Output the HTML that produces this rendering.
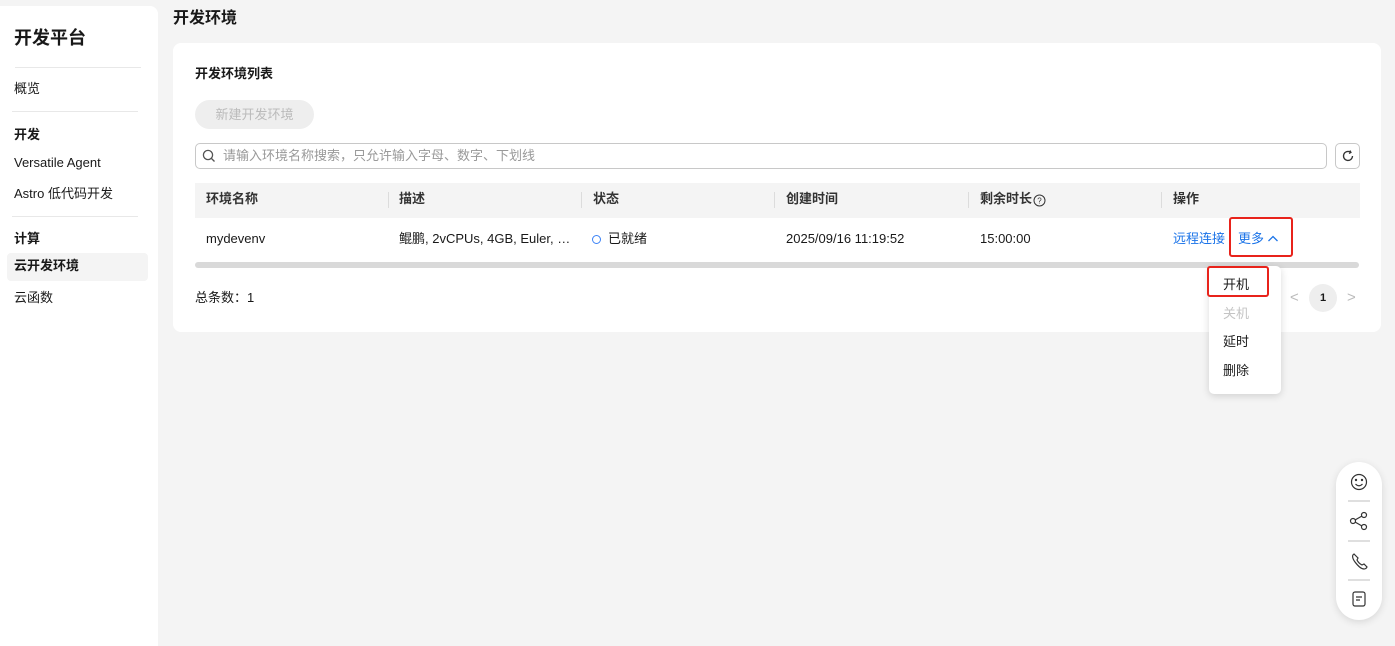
<!DOCTYPE html>
<html><head><meta charset="utf-8"><style>
*{margin:0;padding:0;box-sizing:border-box}
body{width:1395px;height:630px;background:#f4f4f4;font-family:"Liberation Sans","Noto Sans CJK SC",sans-serif;font-size:13px;line-height:16px;color:#191919;position:relative;overflow:hidden}
.abs{position:absolute}
.side{left:0;top:6px;width:158px;height:640px;background:#fff;border-radius:0 8px 0 0}
.hr{height:1px;background:#e8e8e8}
.card{left:173px;top:43px;width:1208px;height:289px;background:#fff;border-radius:8px}
.th{color:#333;font-weight:bold}
.sep{width:1px;height:16px;background:#dcdcdc;top:192px}
</style></head><body>
<div class="abs side"></div>
<div class="abs" style="left:14px;top:27px;font-size:18px;line-height:22px;font-weight:bold">开发平台</div>
<div class="abs hr" style="left:15px;top:67px;width:126px"></div>
<div class="abs" style="left:14px;top:81px">概览</div>
<div class="abs hr" style="left:12px;top:111px;width:126px"></div>
<div class="abs" style="left:14px;top:127px;font-weight:bold">开发</div>
<div class="abs" style="left:14px;top:155px">Versatile Agent</div>
<div class="abs" style="left:14px;top:186px">Astro 低代码开发</div>
<div class="abs hr" style="left:12px;top:216px;width:126px"></div>
<div class="abs" style="left:14px;top:231px;font-weight:bold">计算</div>
<div class="abs" style="left:7px;top:253px;width:141px;height:28px;background:#f4f4f4;border-radius:4px"></div>
<div class="abs" style="left:14px;top:258px;font-weight:bold">云开发环境</div>
<div class="abs" style="left:14px;top:290px">云函数</div>

<div class="abs" style="left:173px;top:9px;font-size:16px;line-height:20px;font-weight:bold">开发环境</div>
<div class="abs card"></div>
<div class="abs" style="left:195px;top:66px;font-weight:bold">开发环境列表</div>
<div class="abs" style="left:195px;top:100px;width:119px;height:29px;background:#eee;border-radius:15px;color:#bbb;text-align:center;line-height:29px">新建开发环境</div>
<div class="abs" style="left:195px;top:143px;width:1132px;height:26px;border:1px solid #c8c8c8;border-radius:5px"></div>
<svg class="abs" style="left:202px;top:149px" width="14" height="14" viewBox="0 0 14 14"><circle cx="6" cy="6" r="4.6" fill="none" stroke="#555" stroke-width="1.3"/><path d="M9.5 9.5L12.5 12.5" stroke="#555" stroke-width="1.3"/></svg>
<div class="abs" style="left:223px;top:148px;color:#999">请输入环境名称搜索，只允许输入字母、数字、下划线</div>
<div class="abs" style="left:1335px;top:143px;width:25px;height:26px;border:1px solid #c8c8c8;border-radius:5px"></div>
<svg class="abs" style="left:1341px;top:149px" width="14" height="14" viewBox="0 0 14 14"><path d="M11.5 7A4.5 4.5 0 1 1 9.5 3.2" fill="none" stroke="#333" stroke-width="1.3"/><path d="M9 1.5L10 3.5 8 4.5" fill="none" stroke="#333" stroke-width="1.2"/></svg>

<div class="abs" style="left:195px;top:183px;width:1165px;height:35px;background:#f4f4f4"></div>
<div class="abs th" style="left:206px;top:191px">环境名称</div>
<div class="abs sep" style="left:388px"></div><div class="abs th" style="left:399px;top:191px">描述</div>
<div class="abs sep" style="left:581px"></div><div class="abs th" style="left:593px;top:191px">状态</div>
<div class="abs sep" style="left:774px"></div><div class="abs th" style="left:786px;top:191px">创建时间</div>
<div class="abs sep" style="left:968px"></div><div class="abs th" style="left:980px;top:191px">剩余时长</div>
<svg class="abs" style="left:1033px;top:194px" width="13" height="13" viewBox="0 0 13 13"><circle cx="6.5" cy="6.5" r="5.5" fill="none" stroke="#333"/><text x="6.5" y="9.5" font-size="8" text-anchor="middle" fill="#333" font-family="Liberation Sans">?</text></svg>
<div class="abs sep" style="left:1161px"></div><div class="abs th" style="left:1173px;top:191px">操作</div>
<div class="abs" style="left:206px;top:231px">mydevenv</div>
<div class="abs" style="left:399px;top:231px">鲲鹏, 2vCPUs, 4GB, Euler, …</div>
<div class="abs" style="left:592px;top:235px;width:9px;height:9px;border:1.5px solid #3b82f6;border-radius:50%"></div>
<div class="abs" style="left:608px;top:231px">已就绪</div>
<div class="abs" style="left:786px;top:231px">2025/09/16 11:19:52</div>
<div class="abs" style="left:980px;top:231px">15:00:00</div>
<div class="abs" style="left:1173px;top:231px;color:#1a73e8">远程连接</div>
<div class="abs" style="left:1238px;top:231px;color:#1a73e8">更多</div>
<svg class="abs" style="left:1267px;top:234px" width="12" height="10" viewBox="0 0 12 10"><path d="M1.5 7L6 2.5 10.5 7" fill="none" stroke="#1a73e8" stroke-width="1.3"/></svg>
<div class="abs" style="left:1229px;top:217px;width:64px;height:40px;border:2px solid #e8231b;border-radius:3px"></div>
<div class="abs" style="left:195px;top:262px;width:1164px;height:6px;background:#d9d9d9;border-radius:3px"></div>
<div class="abs" style="left:195px;top:290px">总条数：1</div>
<div class="abs" style="left:1290px;top:290px;color:#bbb;font-size:15px">&lt;</div>
<div class="abs" style="left:1309px;top:284px;width:28px;height:28px;background:#eee;border-radius:50%;text-align:center;line-height:28px;font-size:11px;font-weight:bold">1</div>
<div class="abs" style="left:1347px;top:290px;color:#bbb;font-size:15px">&gt;</div>

<div class="abs" style="left:1209px;top:266px;width:72px;height:128px;background:#fff;border-radius:5px;box-shadow:0 2px 8px rgba(0,0,0,.15)"></div>
<div class="abs" style="left:1223px;top:277px">开机</div>
<div class="abs" style="left:1207px;top:266px;width:62px;height:31px;border:2px solid #e8231b;border-radius:3px"></div>
<div class="abs" style="left:1223px;top:306px;color:#c4c4c4">关机</div>
<div class="abs" style="left:1223px;top:334px">延时</div>
<div class="abs" style="left:1223px;top:363px">删除</div>

<div class="abs" style="left:1336px;top:462px;width:46px;height:158px;background:#fff;border-radius:23px;box-shadow:0 2px 8px rgba(0,0,0,.12)"></div>
<svg class="abs" style="left:1336px;top:462px" width="46" height="158" viewBox="0 0 46 158" fill="none" stroke="#333" stroke-width="1.2">
<circle cx="23" cy="20" r="7.5"/><circle cx="20" cy="18" r=".6" fill="#333"/><circle cx="26" cy="18" r=".6" fill="#333"/><path d="M19.5 22Q23 25.5 26.5 22"/>
<path d="M12 39H34M12 79H34M12 118H34" stroke="#ccc"/>
<circle cx="17" cy="59" r="2.5"/><circle cx="28" cy="53" r="2.5"/><circle cx="28" cy="65" r="2.5"/><path d="M19 58L26 54M19 60L26 64"/>
<path d="M18 92c-2 1-2 4 1 8s6 7 9 7c2 0 3-2 3-2l-3-3-2 1c-2-1-4-3-5-5l1-2-3-3z"/>
<rect x="17" y="130" width="12" height="14" rx="2"/><path d="M20 135H26M20 138H24"/>
</svg>
</body></html>
